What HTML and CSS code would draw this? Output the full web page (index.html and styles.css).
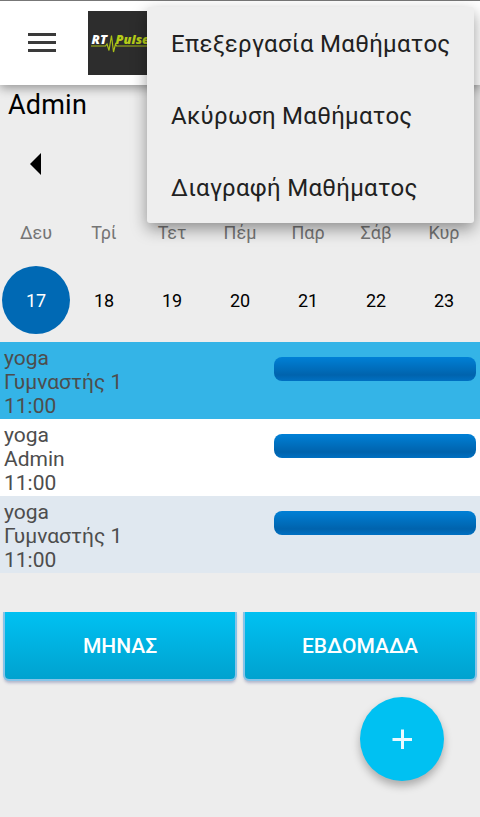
FILE: index.html
```html
<!DOCTYPE html>
<html lang="el">
<head>
    <meta charset="UTF-8">
    <meta name="viewport" content="width=device-width, initial-scale=1.0">
    <title>RT Pulse</title>
    <link rel="stylesheet" href="styles.css">
</head>
<body>
    <header class="toolbar">
        <svg class="menu-icon" width="28" height="20" viewBox="0 0 28 20">
            <path d="M0 1.6h28M0 9.5h28M0 17.6h28" stroke="#3a3a3a" stroke-width="3"/>
        </svg>
        <svg class="logo" width="64" height="64" viewBox="0 0 64 64">
            <rect width="64" height="64" fill="#2d2d2d"/>
            <text class="logo-text" x="3.5" y="32.5" fill="#fff" textLength="15.5" lengthAdjust="spacingAndGlyphs">RT</text>
            <text class="logo-text" x="27.5" y="32.5" fill="#b5cc18" textLength="34" lengthAdjust="spacingAndGlyphs">Pulse</text>
            <path d="M3 35h14.5l1.5-2 2 6.500 2.500-15 2 16.500 2-8 1 2H61" fill="none" stroke="#a9c017" stroke-width="1.200"/>
        </svg>
    </header>

    <div class="popup-menu">
        <div class="popup-item">Επεξεργασία Μαθήματος</div>
        <div class="popup-item">Ακύρωση Μαθήματος</div>
        <div class="popup-item">Διαγραφή Μαθήματος</div>
    </div>

    <h1 class="user">Admin</h1>
    <div class="week-nav">
        <svg width="12" height="22" viewBox="0 0 12 22"><path d="M11 0v22L0 11z"/></svg>
    </div>

    <div class="week weekdays">
        <span>Δευ</span>
        <span>Τρί</span>
        <span>Τετ</span>
        <span>Πέμ</span>
        <span>Παρ</span>
        <span>Σάβ</span>
        <span>Κυρ</span>
    </div>
    <div class="week dates">
        <span class="selected">17</span>
        <span>18</span>
        <span>19</span>
        <span>20</span>
        <span>21</span>
        <span>22</span>
        <span>23</span>
    </div>

    <div class="lessons">
        <div class="lesson active">
            <div>yoga<br>Γυμναστής 1<br>11:00</div>
            <div class="bar"></div>
        </div>
        <div class="lesson">
            <div>yoga<br>Admin<br>11:00</div>
            <div class="bar"></div>
        </div>
        <div class="lesson alt">
            <div>yoga<br>Γυμναστής 1<br>11:00</div>
            <div class="bar"></div>
        </div>
    </div>

    <div class="buttons">
        <button class="btn">ΜΗΝΑΣ</button>
        <button class="btn">ΕΒΔΟΜΑΔΑ</button>
    </div>

    <button class="fab">
        <svg width="20" height="20" viewBox="0 0 20 20"><path d="M10.500 0.500v19.500M0.500 10.500H20" stroke="#e9f9ff" stroke-width="3"/></svg>
    </button>
</body>
</html>
```
FILE: styles.css
```css
* {
    box-sizing: border-box;
}
body {
    margin: 0;
    height: 817px;
    overflow: hidden;
    position: relative;
    background-color: #ededed;
    font-family: Roboto, sans-serif;
}
.toolbar {
    display: flex;
    align-items: center;
    gap: 32px;
    height: 85px;
    padding: 0 14px 0 28px;
    background-color: #fff;
    border-top: 1px solid #777;
    box-shadow: 0 3px 10px rgba(0,0,0,0.38);
}
.menu-icon, .logo {
    display: block;
}
.logo-text {
    font-family: "Open Sans", sans-serif;
    font-size: 13px;
    font-weight: 800;
    font-style: italic;
}
/* Μενού επιλογών μαθήματος */
.popup-menu {
    position: absolute;
    top: 7px;
    left: 147px;
    width: 327px;
    background-color: #eee;
    border-radius: 3px;
    box-shadow: 0 6px 16px rgba(0,0,0,0.4);
    z-index: 2;
}
.popup-item {
    height: 72px;
    padding: 0 24px;
    line-height: 74px;
    font-size: 24px;
    letter-spacing: 0.3px;
    color: #212121;
    white-space: nowrap;
}
.user {
    margin: 0;
    padding-left: 8px;
    height: 40px;
    line-height: 40px;
    font-size: 27px;
    font-weight: normal;
    letter-spacing: 0.2px;
    color: #000;
}
.week-nav {
    display: flex;
    align-items: center;
    height: 78px;
    padding-left: 30px;
}
.week {
    display: grid;
    grid-template-columns: repeat(7, 68px);
    padding-left: 2px;
    font-size: 18px;
    text-align: center;
}
.weekdays {
    height: 63px;
    line-height: 60px;
    color: #757575;
}
.dates {
    height: 76px;
    line-height: 69px;
    color: #000;
}
.selected {
    height: 68px;
    border-radius: 50%;
    background-color: #0069b4;
    color: #fff;
}
.lesson {
    display: flex;
    justify-content: space-between;
    height: 77px;
    padding: 4px 4px 0;
    background-color: #fff;
    color: #4d4d4d;
    font-size: 21px;
    line-height: 24px;
}
.lesson.active {
    background-color: #34b4e7;
}
.lesson.alt {
    background-color: #e0e8f0;
}
.bar {
    width: 202px;
    height: 24px;
    margin-top: 11px;
    border-radius: 8px;
    background: linear-gradient(#0080d6, #0063ad 75%, #0070c2);
}
.buttons {
    display: flex;
    gap: 10px;
    height: 76px;
    margin-top: 39px;
    padding: 0 5px;
    overflow: hidden;
}
.btn {
    flex: 1;
    height: 67px;
    padding: 0;
    border: none;
    border-radius: 0 0 4px 4px;
    background: linear-gradient(#00c1f2, #00a2cf);
    box-shadow: 0 0 0 2px #86c4e8, 0 3px 3px 1px rgba(70,80,140,0.35);
    color: #fff;
    font-family: inherit;
    font-size: 21px;
    font-weight: 500;
}
.fab {
    position: absolute;
    top: 697px;
    left: 360px;
    display: flex;
    align-items: center;
    justify-content: center;
    width: 84px;
    height: 84px;
    padding: 0;
    border: none;
    border-radius: 50%;
    background-color: #00c1f2;
    box-shadow: 0 5px 8px rgba(0,0,0,0.28);
}
```
